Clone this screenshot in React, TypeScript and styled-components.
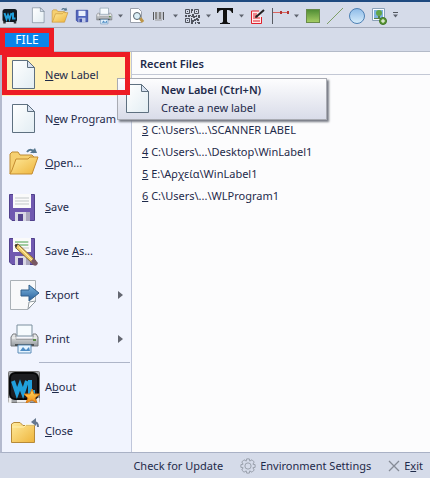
import React from "react";
import styled, { createGlobalStyle } from "styled-components";

const GlobalStyle = createGlobalStyle`
  * { box-sizing: border-box; }
  body { margin: 0; background: #d5dbe9; }
  button { font: inherit; color: inherit; background: none; border: 0; padding: 0; text-align: left; }
  ul { list-style: none; margin: 0; padding: 0; }
  svg { display: block; flex: none; }
`;

const Window = styled.div`
  display: flex;
  flex-direction: column;
  min-height: 100vh;
  font: 11px/16px "Noto Sans", "Open Sans", sans-serif;
  color: #1e2a4a;
  background: #d5dbe9;
`;

const Toolbar = styled.div`
  display: flex;
  align-items: center;
  height: 28px;
  padding-top: 2px;
  border-top: 2px solid #1f4a80;
  border-bottom: 1px solid #a3a9b8;
`;

const AppIcon = styled.div`
  width: 27px;
  padding-left: 2px;
`;

const ToolButton = styled.button<{ $narrow?: boolean }>`
  display: flex;
  flex: none;
  align-items: center;
  justify-content: center;
  width: ${(p) => (p.$narrow ? 11 : 22)}px;
  height: 22px;
`;

const TabStrip = styled.div`
  display: flex;
  height: 24px;
  border-bottom: 1px solid #b3bac8;
`;

const FileTab = styled.button`
  position: relative;
  z-index: 4;
  flex: none;
  width: 54px;
  height: 27px;
  border: 5px solid #ed1c24;
  border-bottom-width: 8px;
  background: #0a84ea;
  && { color: #fff; text-align: center; font-size: 12px; }
  line-height: 14px;
`;

const Backstage = styled.div`
  position: relative;
  display: flex;
  flex: 1;
  background: #fcfcfd;
  border-left: 2px solid #b4bace;
  border-bottom: 1px solid #a9b1c5;
`;

const Menu = styled.nav`
  flex: none;
  width: 130px;
  background: #f1f4fe;
  border-right: 1px solid #bfc6da;
`;

const MenuItem = styled.button<{ $active?: boolean }>`
  position: relative;
  display: flex;
  align-items: center;
  width: 100%;
  height: 44px;
  padding: 1px 8px 0 6px;
  gap: 5px;
  white-space: nowrap;
  && { background: ${(p) => (p.$active ? "#fff0b8" : "none")}; }
`;

const MenuLabel = styled.span`
  flex: 1;
`;

const Highlight = styled.div`
  position: absolute;
  z-index: 3;
  top: 0;
  left: 0;
  width: 128px;
  height: 43px;
  border: 5px solid #ed1c24;
  pointer-events: none;
`;

const Separator = styled.hr`
  height: 1px;
  margin: 2px 1px 1px 37px;
  border: 0;
  background: #aeb5c8;
`;

const Recent = styled.section`
  flex: 1;
  min-width: 0;
`;

const RecentTitle = styled.h2`
  margin: 0;
  height: 23px;
  padding: 4px 8px;
  font-size: 11px;
  line-height: 16px;
  font-weight: 600;
  border-bottom: 1px solid #c3c8d5;
`;

const RecentList = styled.ul`
  && { padding: 44px 10px 0; }
`;

const RecentLink = styled.a`
  display: block;
  color: inherit;
  text-decoration: none;
  line-height: 22px;
`;

const Tooltip = styled.div`
  position: absolute;
  z-index: 2;
  top: 26px;
  left: 115px;
  display: flex;
  align-items: center;
  gap: 7px;
  width: 210px;
  height: 42px;
  padding-left: 4px;
  border: 1px solid #a9abb3;
  background: linear-gradient(#fdfdfe, #d9dce9);
  box-shadow: 2px 2px 2px #777b85;
`;

const TipText = styled.p`
  margin: 0;
  line-height: 18px;
`;

const TipTitle = styled.strong`
  display: block;
  font-weight: 600;
`;

const Footer = styled.footer`
  display: flex;
  justify-content: flex-end;
  align-items: center;
  height: 25px;
  padding-right: 7px;
  gap: 17px;
`;

const FooterButton = styled.button`
  display: flex;
  align-items: center;
  gap: 4px;
  white-space: nowrap;
`;

type ArtProps = { size?: number };

const Svg = ({ size = 32, box = 32, children }: { size?: number; box?: number; children: React.ReactNode }) => (
  <svg width={size} height={size} viewBox={`0 0 ${box} ${box}`} aria-hidden="true">{children}</svg>
);

const HiddenDefs = styled.svg`
  position: absolute;
`;

const Defs = () => (
  <HiddenDefs width="0" height="0" aria-hidden="true">
    <defs>
      <linearGradient id="paper" x2="1" y2="1"><stop stopColor="#fff" /><stop offset="1" stopColor="#e2edf3" /></linearGradient>
      <linearGradient id="folder" x2="1" y2="1"><stop stopColor="#ffeb9d" /><stop offset="1" stopColor="#eeb43b" /></linearGradient>
      <linearGradient id="metal" x2="0" y2="1"><stop stopColor="#f2f2f2" /><stop offset="1" stopColor="#969ba0" /></linearGradient>
      <linearGradient id="arrow" x2="0" y2="1"><stop stopColor="#7db6df" /><stop offset="1" stopColor="#285f9c" /></linearGradient>
      <linearGradient id="green" x2="0" y2="1"><stop stopColor="#4e8c34" /><stop offset="1" stopColor="#a7ce65" /></linearGradient>
      <linearGradient id="sky" x2="0" y2="1"><stop stopColor="#8dbbe8" /><stop offset="1" stopColor="#d8edfb" /></linearGradient>
      <linearGradient id="star" x2="0" y2="1"><stop stopColor="#ffe36a" /><stop offset="1" stopColor="#f28a12" /></linearGradient>
    </defs>
  </HiddenDefs>
);

const PageArt = ({ size }: ArtProps) => (
  <Svg size={size}>
    <path d="M4.500 1.500H19.500L26.500 8.500V29.500H4.500Z" fill="url(#paper)" stroke="#5e7080" />
    <path d="M19.500 1.500V8.500H26.500Z" fill="#d9e2f1" stroke="#5e7080" />
  </Svg>
);

const OpenArt = ({ size }: ArtProps) => (
  <Svg size={size}>
    <path d="M2 27V7L4 5H10L12 8H24L26 10V15" fill="#f6d070" stroke="#bd8b33" />
    <path d="M4 23L8 12H20L22 10H30L24 27H2Z" fill="url(#folder)" stroke="#c58c30" />
    <path d="M19 5C21 2 25 2 26 6" fill="none" stroke="#56778f" strokeWidth="2" />
    <path d="M22 6H29L27 1Z" fill="#56778f" />
  </Svg>
);

const Disk = () => (
  <>
    <path d="M1.500 3.500H26.500V29.500H4L1.500 27Z" fill="#7059b0" stroke="#51418d" />
    <path d="M5 3H23V17H5Z" fill="#fafafa" />
    <path d="M7 7H21M7 10H21M7 13H21" stroke="#c3c8c9" />
    <path d="M7 21H22V30H7Z" fill="#d9d8e4" />
    <path d="M10 23H15V30H10Z" fill="#55458e" />
    <path d="M18 21H22V30H18Z" fill="#aaa6bd" />
  </>
);

const SaveArt = () => <Svg><Disk /></Svg>;

const SaveAsArt = () => (
  <Svg>
    <Disk />
    <path d="M7 7H20M7 10H20" stroke="#63b862" />
    <path d="M7 10L10 9L28 26L25 29L8 13Z" fill="#efcb6b" stroke="#806535" />
    <path d="M7 10L10 9L9 11L8 13Z" fill="#333" />
    <path d="M23 26L26 23L30 28Q29 32 25 30Z" fill="#785763" />
    <path d="M11 12L24 25" stroke="#fff0a9" />
  </Svg>
);

const ExportArt = () => (
  <Svg>
    <path d="M2.500 1.500H27.500V22L20 30.500H2.500Z" fill="#f8f9fa" stroke="#aab1b6" />
    <path d="M20 30L21 23L28 22Z" fill="#fff" stroke="#929ba1" />
    <path d="M13 11H21V6L31 14L21 22V17H13Z" fill="url(#arrow)" stroke="#315f8b" />
  </Svg>
);

const PrinterArt = ({ size }: ArtProps) => (
  <Svg size={size}>
    <path d="M9 2H24V13H9Z" fill="#f6fbfe" stroke="#7a8f9e" />
    <path d="M5 11H8V16H25V11H28L30 14V23H3V14Z" fill="url(#metal)" stroke="#777b7e" />
    <path d="M4 15H29" stroke="#fafafa" />
    <path d="M7 22H26" stroke="#4c5255" strokeWidth="2" />
    <path d="M10 22H23V30H10Z" fill="#e6f4ff" stroke="#5d8cb7" />
    <path d="M12 28L15 24L18 27L21 24L22 28Z" fill="#4f8cc4" />
    <path d="M25 17H28" stroke="#598a45" strokeWidth="2" />
  </Svg>
);

const Monogram = () => <path d="M5 10L9 22L12 14L15 22L19 10M22 9V21H27" fill="none" stroke="#209fdb" strokeWidth="4" />;

const AboutArt = () => (
  <Svg>
    <rect x="0.500" y="0.500" width="31" height="31" rx="1" fill="#a1a3a6" stroke="#777" />
    <path d="M2 32V27M30 32V27M9 30H22" stroke="#eee" strokeWidth="3" />
    <rect x="2" y="2" width="28" height="26" rx="5" fill="#1c1d20" stroke="#050607" strokeWidth="2" />
    <Monogram />
    <path d="M24 18L26 23L32 23L27 27L29 32L24 29L18 32L20 27L16 23L22 23Z" fill="url(#star)" stroke="#d67a17" />
  </Svg>
);

const CloseArt = () => (
  <Svg>
    <path d="M3.500 27.500V9L6 7.500H12L15 10.500H26.500V27.500Z" fill="url(#folder)" stroke="#b78a38" />
    <path d="M4 12H16L18 10H26" fill="none" stroke="#fff2b0" />
    <path d="M30 12Q30 7 26 7" fill="none" stroke="#65778e" strokeWidth="2" />
    <path d="M23 7L28 3V11Z" fill="#65778e" />
  </Svg>
);

const LogoArt = () => (
  <Svg size={16}>
    <path d="M5 31V27M26 31V27" stroke="#333" strokeWidth="5" />
    <rect x="1" y="2" width="29" height="26" rx="5" fill="#111820" />
    <Monogram />
  </Svg>
);

const SmallSaveArt = () => (
  <Svg size={14} box={16}>
    <path d="M1.500 1.500H14.500V14.500H3L1.500 13Z" fill="#5065bd" stroke="#3b4aa0" />
    <path d="M4 2H12V8H4Z" fill="#e8effc" /><path d="M4 10H12V15H4Z" fill="#bfc8e8" /><path d="M5 11H8V15H5Z" fill="#3f4fa6" />
  </Svg>
);

const PreviewArt = () => (
  <Svg size={16} box={16}>
    <path d="M1.500 .5H9.500L12.500 3.500V14.500H1.500Z" fill="#fff" stroke="#9aa0ac" />
    <path d="M11 10L14 14" stroke="#bd9648" strokeWidth="3" />
    <circle cx="8" cy="8" r="3.500" fill="#d9edf5" stroke="#59646d" />
  </Svg>
);

const BarcodeArt = () => (
  <Svg size={16} box={16}>
    <path d="M2.500 4V12M12.500 4V12" stroke="#56585b" /><path d="M5 4V11M9 4V11" stroke="#888" strokeWidth="2" /><path d="M7 4V11M11 4V11" stroke="#aaa" /><path d="M4 12H11" stroke="#999" />
  </Svg>
);

const QrArt = () => (
  <Svg size={16} box={16}>
    <path d="M1.500 1.500H5.500V5.500H1.500ZM10.500 1.500H14.500V5.500H10.500ZM1.500 10.500H5.500V14.500H1.500Z" fill="none" stroke="#50545e" />
    <path d="M3 3H4V4H3ZM12 3H13V4H12ZM3 12H4V13H3ZM7 1H9V3H8V5H7ZM1 7H3V9H1ZM4 7H7V8H6V9H4ZM8 6H10V8H12V7H13V9H11V10H9V9H7V8H8ZM14 7H16V10H14ZM7 10H8V12H10V11H12V13H10V14H9V16H7ZM12 10H14V11H15V13H13V12H12ZM11 14H12V16H11ZM13 14H16V16H14V15H13Z" fill="#50545e" />
  </Svg>
);

const TextArt = () => (
  <Svg size={18} box={18}><path d="M1 1H17V6H16Q15 3 12 3H11V14Q11 16 14 16V17H4V16Q7 16 7 14V3H6Q3 3 2 6H1Z" fill="#111" /></Svg>
);

const NoteArt = () => (
  <Svg size={16} box={16}>
    <path d="M9 3H1.500V15.500H11.500V9" fill="#ffe9e9" stroke="#df202b" /><path d="M3 6H7M3 8H7M3 10H10M3 13H10" stroke="#df202b" /><path d="M6 9L14 2" stroke="#222" strokeWidth="2" /><path d="M5 10L8 9L6 7Z" fill="#222" />
  </Svg>
);

const RulerArt = () => (
  <Svg size={20} box={20}><path d="M2.500 2V18" stroke="#575b63" /><path d="M3 6.500H18" stroke="#d9655f" /><path d="M11 5V8M18 5V8" stroke="#b43532" strokeWidth="2" /></Svg>
);

const RectArt = () => <Svg size={16} box={16}><rect x="1.500" y="1.500" width="13" height="13" fill="url(#green)" stroke="#698b4b" /></Svg>;
const LineArt = () => <Svg size={18} box={18}><path d="M1 17L17 1" stroke="#7f9f67" /></Svg>;
const CircleArt = () => <Svg size={18} box={18}><circle cx="9" cy="9" r="7.500" fill="url(#sky)" stroke="#4d80b4" /></Svg>;

const ImageArt = () => (
  <Svg size={18} box={18}>
    <path d="M2.500 1.500H14.500V13.500H2.500Z" fill="#f8fbff" stroke="#8ba1b8" /><path d="M4 3H13V12H4Z" fill="#7fb3e0" />
    <circle cx="9" cy="6" r="3" fill="#63a548" /><path d="M8 9H10V11H13V12H4V11H8Z" fill="#598348" />
    <circle cx="13" cy="14" r="3.500" fill="#5f9b36" stroke="#3d7327" /><path d="M13 12V16M11 14H15" stroke="#fff" />
  </Svg>
);

const Caret = ({ bar }: { bar?: boolean }) => (
  <Svg size={7} box={7}>{bar && <path d="M1 .5H6" stroke="#51565e" />}<path d="M1 2.500H6L3.500 5.500Z" fill="#5f646f" /></Svg>
);

const GearArt = () => (
  <Svg size={16} box={18}>
    <path d="M7.500 1H10.500L11 3.500L13.500 2L16 4.500L14.500 7L17 7.500V10.500L14.500 11L16 13.500L13.500 16L11 14.500L10.500 17H7.500L7 14.500L4.500 16L2 13.500L3.500 11L1 10.500V7.500L3.500 7L2 4.500L4.500 2L7 3.500Z" fill="none" stroke="#9399a5" />
    <circle cx="9" cy="9" r="3.500" fill="none" stroke="#9399a5" />
  </Svg>
);

const CrossArt = () => <Svg size={12} box={12}><path d="M1 1L11 11M11 1L1 11" stroke="#858b96" strokeWidth="1.300" /></Svg>;

const Submenu = () => <svg width="5" height="8" viewBox="0 0 5 8" aria-hidden="true"><path d="M0 0L5 4L0 8Z" fill="#646771" /></svg>;

type Tool = { name: string; art: React.ReactNode; narrow?: boolean };

const tools: Tool[] = [
  { name: "New", art: <PageArt size={17} /> },
  { name: "Open", art: <OpenArt size={18} /> },
  { name: "Save", art: <SmallSaveArt /> },
  { name: "Print", art: <PrinterArt size={18} /> },
  { name: "Print options", art: <Caret />, narrow: true },
  { name: "Preview", art: <PreviewArt /> },
  { name: "Barcode", art: <BarcodeArt /> },
  { name: "Barcode options", art: <Caret />, narrow: true },
  { name: "QR code", art: <QrArt /> },
  { name: "QR options", art: <Caret />, narrow: true },
  { name: "Text", art: <TextArt /> },
  { name: "Text options", art: <Caret />, narrow: true },
  { name: "Edit note", art: <NoteArt /> },
  { name: "Ruler", art: <RulerArt /> },
  { name: "Ruler options", art: <Caret />, narrow: true },
  { name: "Rectangle", art: <RectArt /> },
  { name: "Line", art: <LineArt /> },
  { name: "Ellipse", art: <CircleArt /> },
  { name: "Image", art: <ImageArt /> },
  { name: "Customize toolbar", art: <Caret bar />, narrow: true },
];

type Entry = { label: React.ReactNode; art: React.ReactNode; active?: boolean; submenu?: boolean };

const documentEntries: Entry[] = [
  { label: <><u>N</u>ew Label</>, art: <PageArt />, active: true },
  { label: <>N<u>e</u>w Program</>, art: <PageArt /> },
  { label: <><u>O</u>pen...</>, art: <OpenArt /> },
  { label: <><u>S</u>ave</>, art: <SaveArt /> },
  { label: <>Save <u>A</u>s...</>, art: <SaveAsArt /> },
  { label: "Export", art: <ExportArt />, submenu: true },
  { label: "Print", art: <PrinterArt />, submenu: true },
];

const appEntries: Entry[] = [
  { label: <>A<u>b</u>out</>, art: <AboutArt /> },
  { label: <><u>C</u>lose</>, art: <CloseArt /> },
];

const recentFiles = [
  { key: 3, path: "C:\\Users\\...\\SCANNER LABEL" },
  { key: 4, path: "C:\\Users\\...\\Desktop\\WinLabel1" },
  { key: 5, path: "E:\\Αρχεία\\WinLabel1" },
  { key: 6, path: "C:\\Users\\...\\WLProgram1" },
];

const MenuEntries = ({ entries }: { entries: Entry[] }) => (
  <>
    {entries.map((entry, i) => (
      <MenuItem key={i} type="button" $active={entry.active}>
        {entry.art}
        <MenuLabel>{entry.label}</MenuLabel>
        {entry.submenu && <Submenu />}
      </MenuItem>
    ))}
  </>
);

export default function App() {
  return (
    <Window>
      <GlobalStyle />
      <Defs />
      <Toolbar role="toolbar" aria-label="Quick access">
        <AppIcon><LogoArt /></AppIcon>
        {tools.map((tool) => (
          <ToolButton key={tool.name} type="button" aria-label={tool.name} $narrow={tool.narrow}>{tool.art}</ToolButton>
        ))}
      </Toolbar>
      <TabStrip>
        <FileTab type="button">FILE</FileTab>
      </TabStrip>
      <Backstage>
        <Menu aria-label="File">
          <MenuEntries entries={documentEntries} />
          <Separator />
          <MenuEntries entries={appEntries} />
        </Menu>
        <Recent>
          <RecentTitle>Recent Files</RecentTitle>
          <RecentList>
            {recentFiles.map((file) => (
              <li key={file.key}><RecentLink href="#"><u>{file.key}</u> {file.path}</RecentLink></li>
            ))}
          </RecentList>
        </Recent>
        <Tooltip role="tooltip">
          <PageArt />
          <TipText><TipTitle>New Label (Ctrl+N)</TipTitle>Create a new label</TipText>
        </Tooltip>
        <Highlight />
      </Backstage>
      <Footer>
        <FooterButton type="button">Check for Update</FooterButton>
        <FooterButton type="button"><GearArt />Environment Settings</FooterButton>
        <FooterButton type="button"><CrossArt /><span>E<u>x</u>it</span></FooterButton>
      </Footer>
    </Window>
  );
}
